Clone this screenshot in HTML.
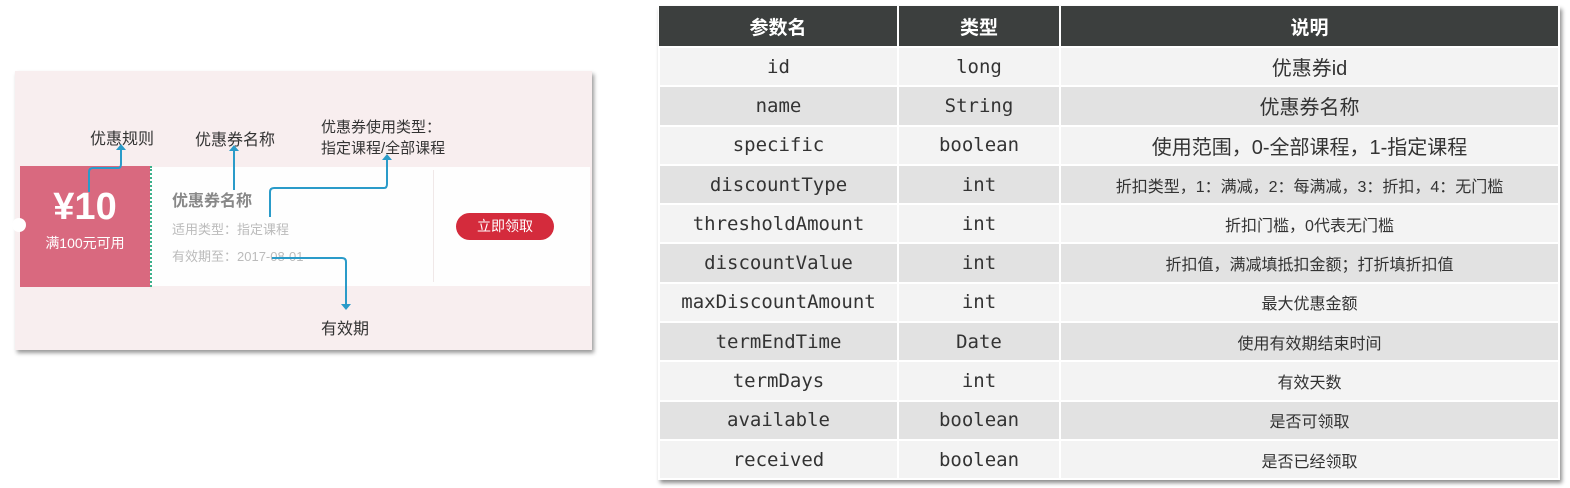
<!DOCTYPE html>
<html><head><meta charset="utf-8"><style>
body{margin:0;width:1570px;height:488px;background:#fff;position:relative;overflow:hidden;font-family:"Liberation Sans","Noto Sans CJK SC",sans-serif}
.a{position:absolute;white-space:nowrap}
.t{position:absolute;left:658px;top:6px;width:902px;border-collapse:collapse;box-shadow:2px 3px 4px rgba(0,0,0,.45)}
td,th{padding:0;text-align:center;border:2px solid #fff;border-top:0;border-bottom:2px solid #fff}
th{background:#3c3f3e;color:#fff;font-size:19px;height:40px;border-left:2px solid #ddd}
td{height:37.3px;font-size:20px;color:#333}
td.m{font-family:"DejaVu Sans Mono","Liberation Mono",monospace;font-size:19px}
td.c{font-size:16px}
tr:nth-child(even) td{background:#f3f3f3}
tr:nth-child(odd) td{background:#e2e2e2}
</style></head><body>
<div class="a" style="left:15px;top:71px;width:577px;height:279px;background:#f8eeef;box-shadow:2px 3px 4px rgba(0,0,0,.4)"></div>
<div class="a" style="left:150px;top:167px;width:440px;height:119px;background:#fefefe"></div>
<div class="a" style="left:433px;top:170px;width:1px;height:112px;background:#f0e8e8"></div>
<div class="a" style="left:20px;top:166px;width:130px;height:121px;background:#d9697f"></div>
<div class="a" style="left:150px;top:166px;width:2px;height:121px;border-left:2px dotted #3bb08a"></div>
<div class="a" style="left:12px;top:218px;width:14px;height:14px;border-radius:50%;background:#fff"></div>
<div class="a" style="left:20px;top:186px;width:130px;text-align:center;color:#fff;font-weight:bold;font-size:38px">¥10</div>
<div class="a" style="left:20px;top:233px;width:130px;text-align:center;color:#fff;font-size:14px">满100元可用</div>
<div class="a" style="left:172px;top:187px;color:#888;font-weight:bold;font-size:16px">优惠券名称</div>
<div class="a" style="left:172px;top:219px;color:#bbb;font-size:13px">适用类型：指定课程</div>
<div class="a" style="left:172px;top:246px;color:#bbb;font-size:13px">有效期至：2017-08-01</div>
<div class="a" style="left:456px;top:213px;width:98px;height:27px;border-radius:14px;background:#d42b3c;color:#fff;font-size:14px;text-align:center;line-height:27px">立即领取</div>
<div class="a" style="left:90px;top:125px;color:#333;font-size:16px">优惠规则</div>
<div class="a" style="left:195px;top:126px;color:#333;font-size:16px">优惠券名称</div>
<div class="a" style="left:321px;top:117px;color:#333;font-size:15px;line-height:21px">优惠券使用类型：<br>指定课程/全部课程</div>
<div class="a" style="left:321px;top:315px;color:#333;font-size:16px">有效期</div>
<svg class="a" style="left:0;top:0" width="620" height="360" fill="none" stroke="#2a9bc9" stroke-width="2">
<path d="M89 192V172q0-4 4-4h25q3 0 3-4V148"/><path d="M234 190V148"/><path d="M270 217V192q0-4 4-4h110q3 0 3-4V158"/><path d="M272 258h70q4 0 4 4V304"/>
<path d="M116 150l5-6 5 6z M229 151l5-6 5 6z M382 160l5-6 5 6z M341 304l5 6 5-6z" fill="#2a9bc9" stroke="none"/>
</svg>
<table class="t">
<tr><th style="width:238px;border-left:0">参数名</th><th style="width:160px">类型</th><th>说明</th></tr>
<tr><td class="m">id</td><td class="m">long</td><td>优惠券id</td></tr>
<tr><td class="m">name</td><td class="m">String</td><td>优惠券名称</td></tr>
<tr><td class="m">specific</td><td class="m">boolean</td><td>使用范围，0-全部课程，1-指定课程</td></tr>
<tr><td class="m">discountType</td><td class="m">int</td><td class="c">折扣类型，1：满减，2：每满减，3：折扣，4：无门槛</td></tr>
<tr><td class="m">thresholdAmount</td><td class="m">int</td><td class="c">折扣门槛，0代表无门槛</td></tr>
<tr><td class="m">discountValue</td><td class="m">int</td><td class="c">折扣值，满减填抵扣金额；打折填折扣值</td></tr>
<tr><td class="m">maxDiscountAmount</td><td class="m">int</td><td class="c">最大优惠金额</td></tr>
<tr><td class="m">termEndTime</td><td class="m">Date</td><td class="c">使用有效期结束时间</td></tr>
<tr><td class="m">termDays</td><td class="m">int</td><td class="c">有效天数</td></tr>
<tr><td class="m">available</td><td class="m">boolean</td><td class="c">是否可领取</td></tr>
<tr><td class="m">received</td><td class="m">boolean</td><td class="c">是否已经领取</td></tr>
</table>
</body></html>
